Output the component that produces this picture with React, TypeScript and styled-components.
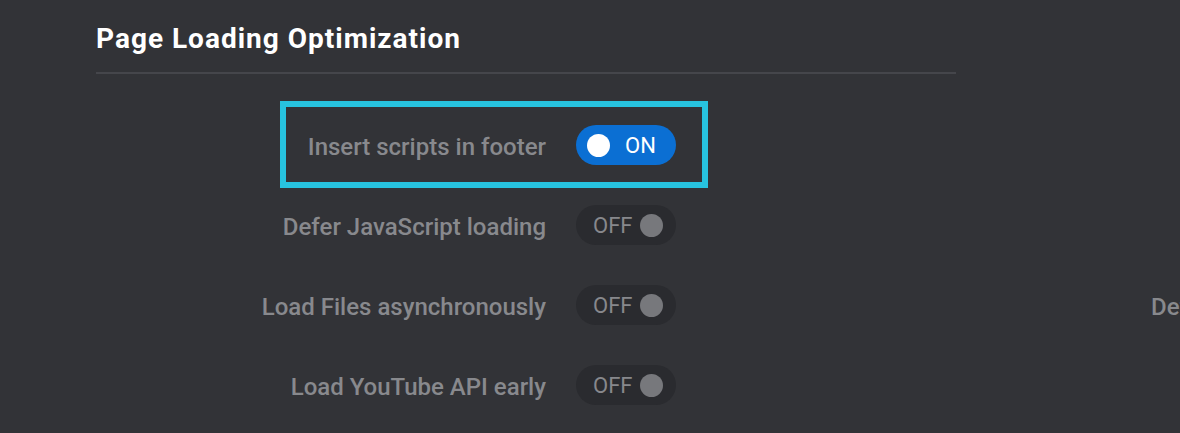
import React from "react";
import styled, { createGlobalStyle } from "styled-components";

const Global = createGlobalStyle`
  html, body { margin: 0; padding: 0; background: #323337; }
  body { width: 1180px; height: 433px; overflow: hidden; font-family: Roboto, "Noto Sans", sans-serif; }
`;

const Page = styled.div`
  display: flex;
  width: 1180px;
  height: 433px;
  overflow: hidden;
  background: #323337;
  box-sizing: border-box;
  padding-left: 96px;
`;

const Main = styled.section`
  width: 860px;
  flex-shrink: 0;
  padding-top: 23px;
`;

const Title = styled.h2`
  margin: 0;
  font-size: 28px;
  line-height: 32px;
  font-weight: 700;
  letter-spacing: 1px;
  color: #ffffff;
`;

const Divider = styled.div`
  margin-top: 17px;
  height: 2px;
  background: #45464b;
`;

const Rows = styled.div`
  margin-top: 31px;
  display: flex;
  flex-direction: column;
`;

const Row = styled.div`
  position: relative;
  display: grid;
  grid-template-columns: 450px 100px;
  column-gap: 30px;
  align-items: center;
  height: 80px;
`;

const Label = styled.span`
  text-align: right;
  font-size: 24px;
  font-weight: 500;
  color: #88898d;
  white-space: nowrap;
  padding-top: 3px;
`;

const Highlight = styled.div`
  position: absolute;
  left: 184px;
  top: -4px;
  width: 416px;
  height: 75px;
  border: 6px solid #27c3df;
  pointer-events: none;
`;

const Toggle = styled.div<{ $on: boolean }>`
  width: 100px;
  height: 40px;
  border-radius: 20px;
  box-sizing: border-box;
  display: flex;
  align-items: center;
  flex-direction: ${(p) => (p.$on ? "row" : "row-reverse")};
  justify-content: flex-end;
  justify-content: ${(p) => (p.$on ? "flex-start" : "flex-end")};
  gap: ${(p) => (p.$on ? "15px" : "8px")};
  padding: ${(p) => (p.$on ? "0 0 0 11px" : "0 12px 0 17px")};
  background: ${(p) => (p.$on ? "#0b6fd3" : "#2a2b2f")};
`;

const Knob = styled.span<{ $on: boolean }>`
  width: 23px;
  height: 23px;
  border-radius: 50%;
  flex-shrink: 0;
  background: ${(p) => (p.$on ? "#ffffff" : "#77787c")};
`;

const ToggleText = styled.span<{ $on: boolean }>`
  font-size: 22px;
  line-height: 22px;
  font-weight: 400;
  padding-top: 1px;
  color: ${(p) => (p.$on ? "#ffffff" : "#87888c")};
`;

const Side = styled.section`
  margin-left: 195px;
  padding-top: 265px;
  white-space: nowrap;
`;

const SideRow = styled.div`
  display: flex;
  align-items: center;
  height: 80px;
`;

const rows = [
  { label: "Insert scripts in footer", on: true, highlight: true },
  { label: "Defer JavaScript loading", on: false },
  { label: "Load Files asynchronously", on: false },
  { label: "Load YouTube API early", on: false },
];

function Switch({ on }: { on: boolean }) {
  return (
    <Toggle $on={on}>
      <Knob $on={on} />
      <ToggleText $on={on}>{on ? "ON" : "OFF"}</ToggleText>
    </Toggle>
  );
}

export default function App() {
  return (
    <>
      <Global />
      <Page>
        <Main>
          <Title>Page Loading Optimization</Title>
          <Divider />
          <Rows>
            {rows.map((r) => (
              <Row key={r.label}>
                <Label>{r.label}</Label>
                <Switch on={r.on} />
                {r.highlight && <Highlight />}
              </Row>
            ))}
          </Rows>
        </Main>
        <Side>
          <SideRow>
            <Label>Defer CSS loading</Label>
          </SideRow>
        </Side>
      </Page>
    </>
  );
}
